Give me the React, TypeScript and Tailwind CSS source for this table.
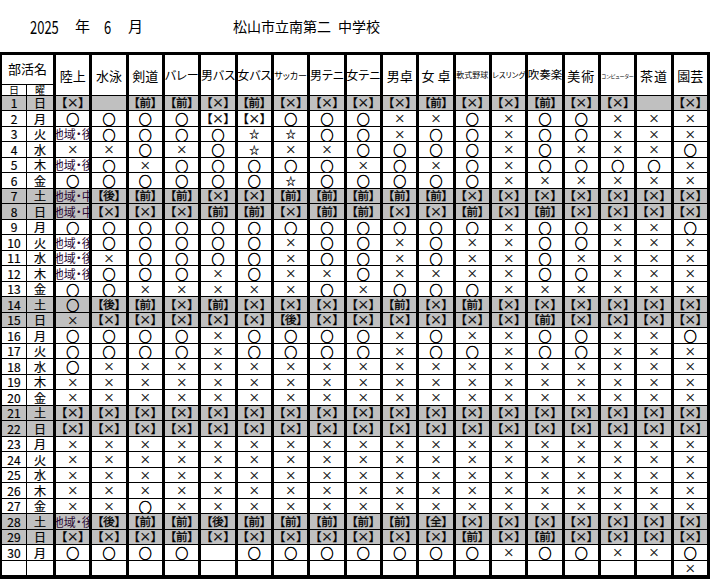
import React from "react";

const clubs: { name: string; cls: string }[] = [
  { name: "陸上", cls: "text-[13px]" },
  { name: "水泳", cls: "text-[13px]" },
  { name: "剣道", cls: "text-[13px]" },
  { name: "バレー", cls: "text-[12px]" },
  { name: "男バス", cls: "text-[12px]" },
  { name: "女バス", cls: "text-[12px]" },
  { name: "サッカー", cls: "text-[9px]" },
  { name: "男テニ", cls: "text-[12px]" },
  { name: "女テニ", cls: "text-[12px]" },
  { name: "男卓", cls: "text-[13px]" },
  { name: "女 卓", cls: "text-[13px]" },
  { name: "軟式野球", cls: "text-[8px]" },
  { name: "レスリング", cls: "text-[7.5px]" },
  { name: "吹奏楽", cls: "text-[11.5px]" },
  { name: "美術", cls: "text-[13px] tracking-[1px]" },
  { name: "コンピューター", cls: "text-[5px]" },
  { name: "茶道", cls: "text-[13px] tracking-[1px]" },
  { name: "園芸", cls: "text-[13px]" },
];

const allx = "xxxxxxxxxxxxxxxxxx";
const allX = "XXXXXXXXXXXXXXXXXX";

const data: string[] = [
  "X-MMXMXX" + "XXMXXMXX-X", // 1
  "ooooXXoo" + "oxxoxooxxx", // 2
  "goooosso" + "oxooxooxxx", // 3
  "xxoxosxx" + "ooooxoxxxo", // 4
  "goxooooo" + "xoxoxoooox", // 5
  "ooooooso" + "ooooxxxxxx", // 6
  "cAMMXXMM" + "MMMXXXXXXX", // 7
  "cXXXMMXM" + "MXXMXMXXXX", // 8
  "oooooooo" + "ooooxooxxo", // 9
  "goooooxo" + "oxoxxooxxx", // 10
  "gxooooxo" + "oxoxxoxxxx", // 11
  "goooxoxx" + "oxxxxooxxx", // 12
  "ooxxxxxo" + "xoooxxxxxx", // 13
  "oAMXMXXX" + "XMXMXXXXXX", // 14
  "xXXXXXAX" + "XXXXXMXXXX", // 15
  "ooooxooo" + "oxoxxooxxo", // 16
  "ooooxooo" + "oxooxooxxx", // 17
  "oxxxxxxx" + "xxxxxxxxxx", // 18
  allx, // 19
  allx, // 20
  allX, // 21
  allX, // 22
  allx, // 23
  allx, // 24
  allx, // 25
  allx, // 26
  "xxoxxxxx" + "xxxxxxxxxx", // 27
  "gAMMAMMM" + "MMZXXXXXXX", // 28
  "XXXMXXXX" + "XXXMXMXXXX", // 29
  "oooo-ooo" + "ooooxooxxo", // 30
];

const weekdays = ["日", "月", "火", "水", "木", "金", "土"];

function Mark({ v }: { v: string }) {
  switch (v) {
    case "o":
      return <span className="text-[13px] [-webkit-text-stroke:0.5px_black]">○</span>;
    case "x":
      return <span className="text-[11px] [-webkit-text-stroke:0.2px_black]">×</span>;
    case "s":
      return <span className="text-[10px] [-webkit-text-stroke:0.2px_black]">☆</span>;
    case "X":
      return <span className="text-[11.5px] [-webkit-text-stroke:0.3px_black]">【×】</span>;
    case "M":
      return <span className="text-[11.5px] [-webkit-text-stroke:0.3px_black]">【前】</span>;
    case "A":
      return <span className="text-[11.5px] [-webkit-text-stroke:0.3px_black]">【後】</span>;
    case "Z":
      return <span className="text-[11.5px] [-webkit-text-stroke:0.3px_black]">【全】</span>;
    case "g":
      return <span className="text-[12px] text-[#2a0a34]">地域・後</span>;
    case "c":
      return <span className="text-[12px] text-[#2a0a34]">地域・中</span>;
    default:
      return null;
  }
}

export default function App() {
  const rows = [...data, "-----------------x"];
  return (
    <div className="w-[710px] h-[579px] bg-white text-black font-['Noto_Sans_CJK_JP',sans-serif] [font-feature-settings:'palt'] overflow-hidden">
      <div className="h-[52px] flex items-center pb-[1px] leading-none">
        <span className="ml-[30px] w-[45px] inline-block text-[18px] scale-x-[0.72] origin-left">2025</span>
        <span className="w-[29px] text-[15px]">年</span>
        <span className="w-[24px] inline-block text-[18px] scale-x-[0.72] origin-left">6</span>
        <span className="w-[105px] text-[15px]">月</span>
        <span className="text-[14px]">松山市立南第二</span>
        <span className="ml-[7px] text-[14px]">中学校</span>
      </div>
      <div className="grid grid-cols-[25px_26px_repeat(18,minmax(0,1fr))] grid-rows-[30px_11px_repeat(15,15px_16px)_15px] border-t-[3px] border-l-2 border-r-[3px] border-b-[3px] border-black leading-none">
        <div className="col-span-2 flex items-center justify-center border-b border-black text-[13px] pb-[2px]">
          部活名
        </div>
        {clubs.map((c) => (
          <div
            key={c.name}
            className={
              "row-span-2 flex items-center justify-center border-l-[3px] border-b border-black whitespace-nowrap overflow-hidden " +
              c.cls
            }
          >
            {c.name}
          </div>
        ))}
        <div className="flex items-center justify-center border-b border-r border-black text-[10px]">日</div>
        <div className="flex items-center justify-center border-b border-black text-[10px]">曜</div>
        {rows.map((r, i) => {
          const d = i + 1;
          const last = i === 30;
          const wd = last ? "" : weekdays[i % 7];
          const gray = !last && (wd === "土" || wd === "日");
          const bg = gray ? "bg-[#c0c0c0]" : "bg-white";
          return (
            <React.Fragment key={i}>
              <div className={"flex items-center justify-center border-b border-r border-black text-[12px] [-webkit-text-stroke:0.2px_black] " + bg}>
                {last ? "" : d}
              </div>
              <div className={"flex items-center justify-center border-b border-black text-[12px] [-webkit-text-stroke:0.2px_black] " + bg}>
                {wd}
              </div>
              {r.split("").map((v, j) => (
                <div
                  key={j}
                  className={
                    "flex items-center justify-center border-l-[3px] border-b border-black whitespace-nowrap overflow-hidden " +
                    bg
                  }
                >
                  <Mark v={v} />
                </div>
              ))}
            </React.Fragment>
          );
        })}
      </div>
    </div>
  );
}
